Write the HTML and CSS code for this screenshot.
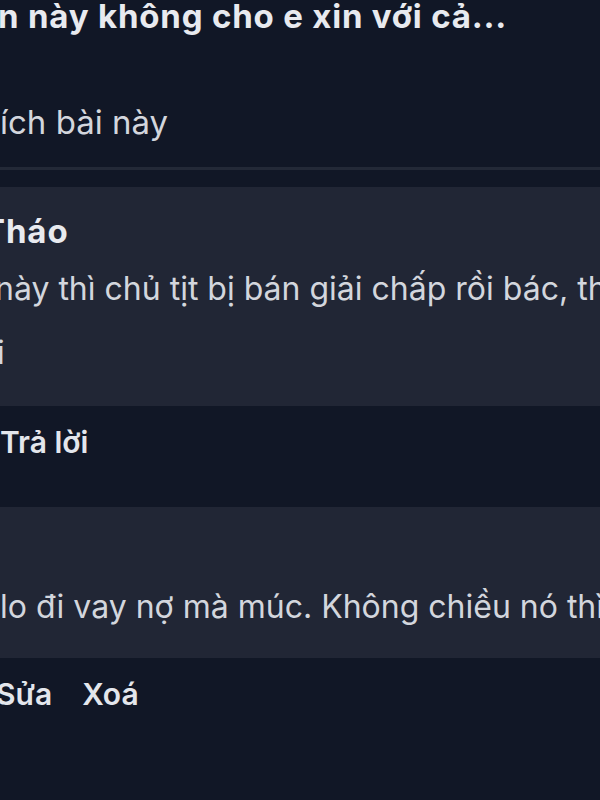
FILE: index.html
```html
<!DOCTYPE html>
<html lang="vi">
<head>
<meta charset="utf-8">
<link rel="stylesheet" href="styles.css">
</head>
<body>
<div class="page">
  <h1 class="post-title">n này không cho e xin với cả...</h1>
  <div class="likes">ích bài này</div>
  <div class="divider"></div>

  <div class="comment">
    <div class="card card-first">
      <div class="author">Tháo</div>
      <div class="line line-a">này thì chủ tịt bị bán giải chấp rồi bác, thế</div>
      <div class="line line-b">i</div>
    </div>
    <div class="actions"><span class="action">Trả lời</span></div>
  </div>

  <div class="comment">
    <div class="card card-second">
      <div class="author-empty"></div>
      <div class="line">lo đi vay nợ mà múc. Không chiều nó thì</div>
    </div>
    <div class="actions actions-own"><span class="action">Sửa</span><span class="action">Xoá</span></div>
  </div>
</div>
</body>
</html>
```

FILE: styles.css
```css
html, body {
  margin: 0;
  padding: 0;
  background: #111726;
  width: 600px;
  height: 800px;
  overflow: hidden;
}
.page {
  font-family: Inter, "Noto Sans", sans-serif;
  color: #d6d9e0;
  display: flex;
  flex-direction: column;
}
.post-title {
  margin: 0 0 0 -2px;
  font-size: 33px;
  font-weight: 700;
  line-height: 32px;
  letter-spacing: 0.8px;
  color: #e8eaef;
  white-space: nowrap;
}
.likes {
  margin-top: 70px;
  font-size: 33px;
  line-height: 40px;
  color: #d3d6dd;
  white-space: nowrap;
}
.divider {
  margin-top: 25px;
  height: 3px;
  background: #232937;
}
.comment {
  display: flex;
  flex-direction: column;
}
.card {
  background: #212635;
  display: flex;
  flex-direction: column;
  overflow: hidden;
}
.card-first {
  margin-top: 17px;
  padding: 19px 0 21px;
}
.card-second {
  padding: 20px 0 19px;
}
.author {
  margin-left: -17px;
  font-size: 33px;
  font-weight: 700;
  line-height: 51px;
  letter-spacing: 0.9px;
  color: #e8eaef;
  white-space: nowrap;
}
.author-empty {
  height: 48px;
}
.line {
  font-size: 32px;
  line-height: 64px;
  color: #d3d6dd;
  white-space: nowrap;
}
.line-a {
  margin-left: -5px;
}
.line-b {
  margin-left: -3px;
}
.actions {
  display: flex;
  gap: 30px;
  height: 101px;
  align-items: flex-start;
  padding-top: 16px;
  box-sizing: border-box;
}
.actions-own {
  margin-left: -4px;
}
.action {
  font-size: 30px;
  font-weight: 600;
  line-height: 40px;
  color: #e3e6ec;
}
```
